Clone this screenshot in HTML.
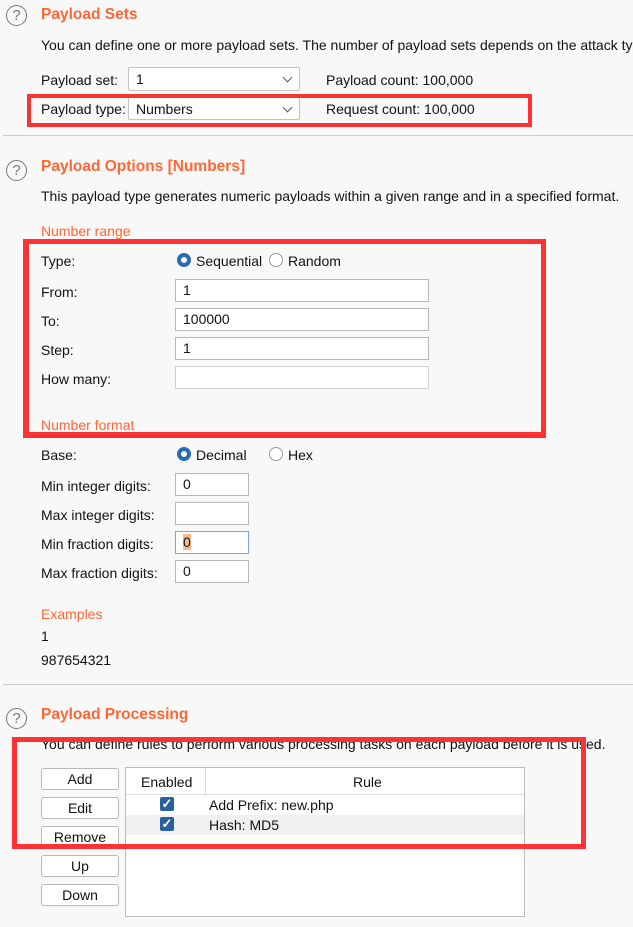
<!DOCTYPE html>
<html><head><meta charset="utf-8"><style>
body{margin:0;width:633px;height:927px;background:#f8f8f8;font-family:"Liberation Sans",sans-serif;font-size:14px;color:#111;position:relative;overflow:hidden}
.a{position:absolute;white-space:nowrap}
.h{font-weight:bold;font-size:15.5px;color:#ff6633}
.o{color:#ff6633}
.in{position:absolute;background:#fff;border:1px solid #b8b8b8;box-sizing:border-box;padding-left:7px;line-height:21px}
.sel{position:absolute;background:#fff;border:1px solid #c4c4c4;border-radius:2px;box-sizing:border-box;padding-left:7px;line-height:22px}
.sel:after{content:"";position:absolute;right:8px;top:6px;width:6px;height:6px;border-right:1px solid #555;border-bottom:1px solid #555;transform:rotate(45deg)}
.red{position:absolute;border:4px solid #ff3333;box-sizing:border-box}
.sep{position:absolute;left:3px;right:0;height:1px;background:#ccc}
.q{position:absolute;width:19px;height:19px;border:1.5px solid #777;border-radius:50%;color:#777;font-size:15px;text-align:center;line-height:19px}
.btn{position:absolute;left:41px;width:78px;height:22px;border:1px solid #b8b8b8;border-radius:3px;background:#fff;box-sizing:border-box;text-align:center;line-height:20px}
.rad{position:absolute;width:14px;height:14px;border-radius:50%;box-sizing:border-box}
.on{border:4px solid #2a6bb0;background:#fff}
.off{border:1px solid #999;background:#fff}
.cb{position:absolute;width:14px;height:14px;background:#2a5f9e;border-radius:2px;color:#fff;font-size:13px;font-weight:bold;line-height:14px;text-align:center}
</style></head><body>
<div class="q" style="left:6px;top:5px">?</div>
<div class="a h" style="left:41px;top:6px">Payload Sets</div>
<div class="a" style="left:41px;top:37px">You can define one or more payload sets. The number of payload sets depends on the attack type</div>
<div class="a" style="left:41px;top:72px">Payload set:</div>
<div class="sel" style="left:128px;top:67px;width:172px;height:24px">1</div>
<div class="a" style="left:326px;top:72px">Payload count: 100,000</div>
<div class="a" style="left:41px;top:101px">Payload type:</div>
<div class="sel" style="left:128px;top:97px;width:172px;height:23px">Numbers</div>
<div class="a" style="left:326px;top:101px">Request count: 100,000</div>
<div class="red" style="left:27px;top:94px;width:505px;height:33px"></div>
<div class="sep" style="top:135px"></div>

<div class="q" style="left:6px;top:160px">?</div>
<div class="a h" style="left:41px;top:158px">Payload Options [Numbers]</div>
<div class="a" style="left:41px;top:188px">This payload type generates numeric payloads within a given range and in a specified format.</div>
<div class="a o" style="left:41px;top:223px">Number range</div>
<div class="a" style="left:41px;top:253px">Type:</div>
<div class="rad on" style="left:177px;top:253px"></div><div class="a" style="left:196px;top:253px">Sequential</div>
<div class="rad off" style="left:269px;top:253px"></div><div class="a" style="left:288px;top:253px">Random</div>
<div class="a" style="left:41px;top:284px">From:</div><div class="in" style="left:175px;top:279px;width:254px;height:23px">1</div>
<div class="a" style="left:41px;top:313px">To:</div><div class="in" style="left:175px;top:308px;width:254px;height:23px">100000</div>
<div class="a" style="left:41px;top:342px">Step:</div><div class="in" style="left:175px;top:337px;width:254px;height:23px">1</div>
<div class="a" style="left:41px;top:371px">How many:</div><div class="in" style="left:175px;top:366px;width:254px;height:23px;border-color:#d0d0d0"></div>
<div class="a o" style="left:41px;top:417px">Number format</div>
<div class="red" style="left:23px;top:239px;width:523px;height:199px;border-width:5px 5px 6px 6px"></div>
<div class="a" style="left:41px;top:447px">Base:</div>
<div class="rad on" style="left:177px;top:447px"></div><div class="a" style="left:196px;top:447px">Decimal</div>
<div class="rad off" style="left:269px;top:447px"></div><div class="a" style="left:288px;top:447px">Hex</div>
<div class="a" style="left:41px;top:478px">Min integer digits:</div><div class="in" style="left:175px;top:473px;width:74px;height:23px">0</div>
<div class="a" style="left:41px;top:507px">Max integer digits:</div><div class="in" style="left:175px;top:502px;width:74px;height:23px"></div>
<div class="a" style="left:41px;top:536px">Min fraction digits:</div><div class="in" style="left:175px;top:531px;width:74px;height:23px;border-color:#7aa7dd"><span style="background:#f7b98a">0</span></div>
<div class="a" style="left:41px;top:565px">Max fraction digits:</div><div class="in" style="left:175px;top:560px;width:74px;height:23px">0</div>
<div class="a o" style="left:41px;top:606px">Examples</div>
<div class="a" style="left:41px;top:628px">1</div>
<div class="a" style="left:41px;top:652px">987654321</div>
<div class="sep" style="top:684px"></div>

<div class="q" style="left:6px;top:708px">?</div>
<div class="a h" style="left:41px;top:706px">Payload Processing</div>
<div class="a" style="left:41px;top:736px">You can define rules to perform various processing tasks on each payload before it is used.</div>
<div class="btn" style="top:768px">Add</div>
<div class="btn" style="top:797px">Edit</div>
<div class="btn" style="top:826px">Remove</div>
<div class="btn" style="top:855px">Up</div>
<div class="btn" style="top:884px">Down</div>
<div style="position:absolute;left:125px;top:767px;width:400px;height:150px;background:#fff;border:1px solid #bbb;box-sizing:border-box">
 <div style="position:absolute;left:0;top:0;width:398px;height:26px;border-bottom:1px solid #ddd"></div>
 <div style="position:absolute;left:79px;top:0;width:1px;height:26px;background:#ddd"></div>
 <div class="a" style="left:15px;top:6px">Enabled</div>
 <div class="a" style="left:227px;top:6px">Rule</div>
 <div style="position:absolute;left:0;top:47px;width:398px;height:20px;background:#f0f0f0"></div>
 <div class="cb" style="left:34px;top:29px">✓</div><div class="a" style="left:83px;top:29px">Add Prefix: new.php</div>
 <div class="cb" style="left:34px;top:49px">✓</div><div class="a" style="left:83px;top:49px">Hash: MD5</div>
</div>
<div class="red" style="left:12px;top:737px;width:574px;height:112px;border-width:5px"></div>
</body></html>
